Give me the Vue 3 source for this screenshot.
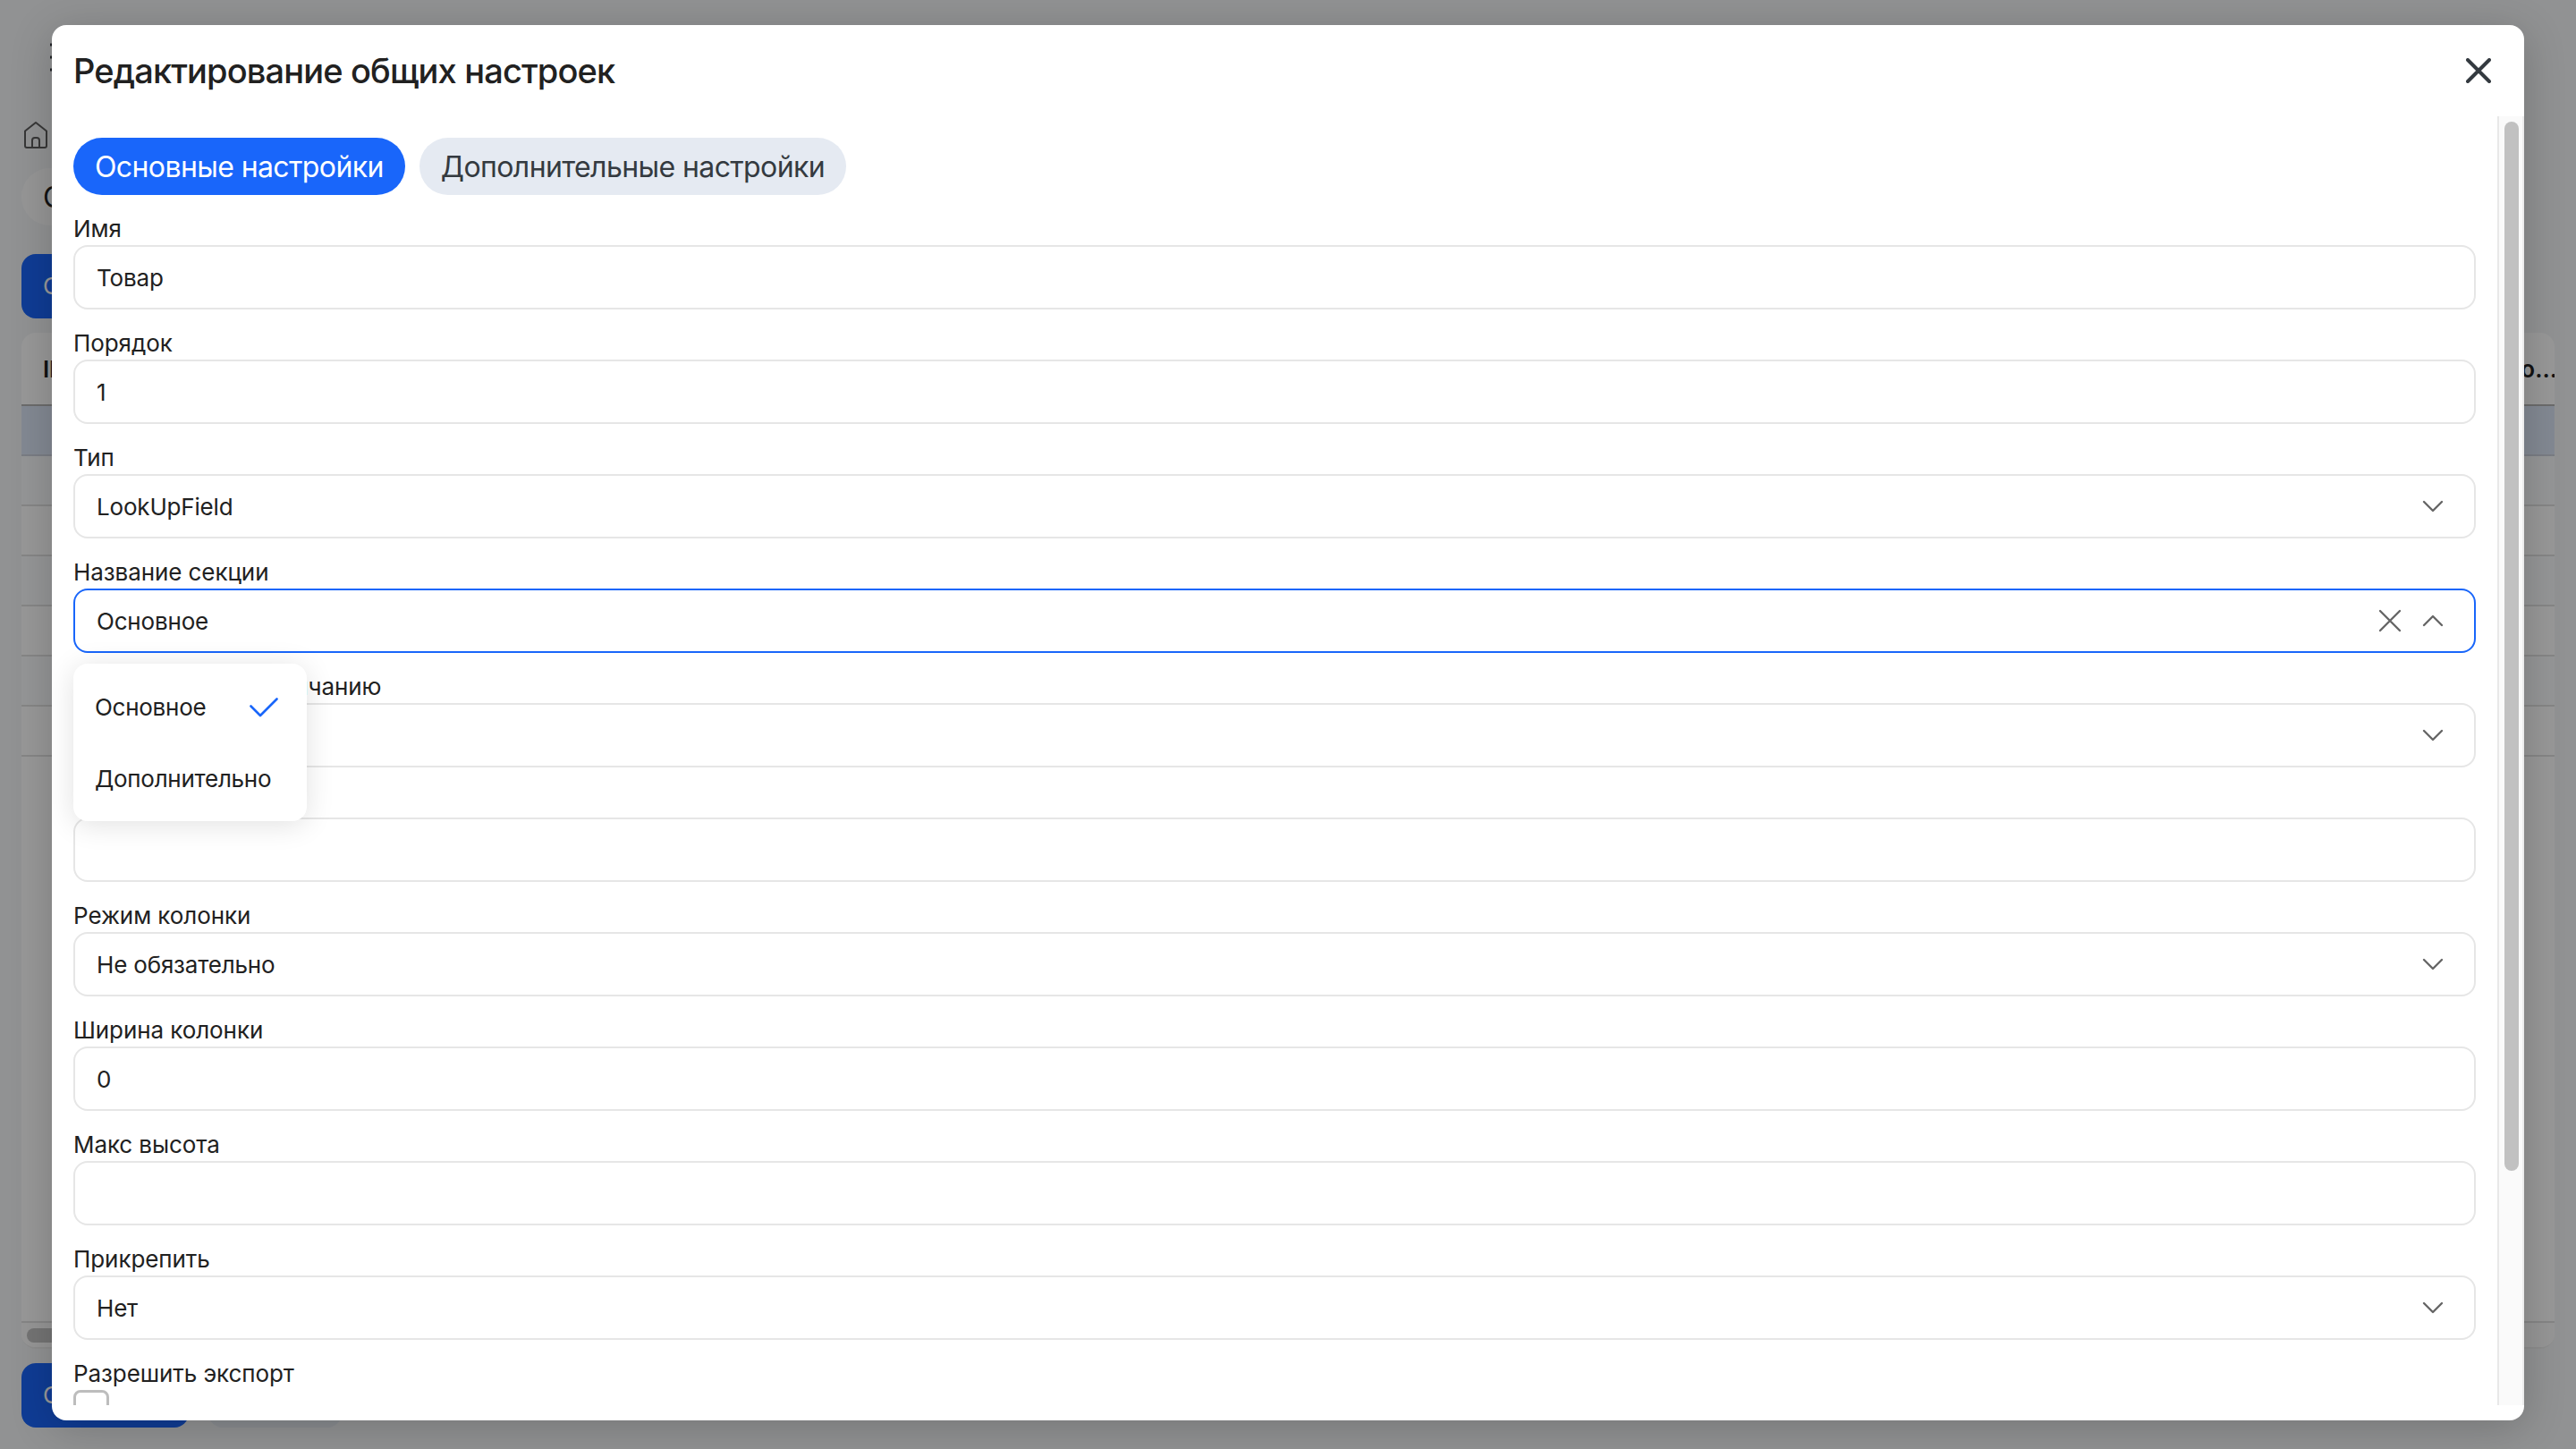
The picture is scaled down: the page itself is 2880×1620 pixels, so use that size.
<template>
  <div class="page">
    <div class="topbar">
      <svg class="burger" viewBox="0 0 40 32">
        <path d="M0 2h40M0 16h40M0 30h40" />
      </svg>
    </div>
    <svg class="home" viewBox="0 0 28 32">
      <path d="M2 11.500L14 2l12 9.500V28q0 2-2 2H4q-2 0-2-2zM10 30V22q0-3 3-3h2q3 0 3 3v8" />
    </svg>
    <div class="chip">О</div>
    <div class="page-btn">С</div>
    <div class="table">
      <div class="thead">
        <span>ID</span>
        <span class="last">о...</span>
      </div>
      <div v-for="n in 7" :key="n" class="row" :class="{ selected: n === 1, odd: n % 2 === 0 }" />
      <div class="table-scroll">
        <div class="table-thumb" />
      </div>
    </div>
    <div class="page-footer">
      <div class="page-btn save">С</div>
      <div class="page-btn cancel" />
    </div>
  </div>

  <div class="overlay">
    <div class="modal">
      <header class="modal-header">
        <h2 class="title">Редактирование общих настроек</h2>
        <svg class="close" viewBox="0 0 28 28" @click="dropdownOpen = false">
          <path d="M2 2l24 24M26 2L2 26" />
        </svg>
      </header>

      <div class="modal-body">
        <div class="content">
          <div class="tabs">
            <button
              v-for="(tab, i) in tabs"
              :key="tab"
              class="tab"
              :class="{ active: activeTab === i }"
              @click="activeTab = i"
            >{{ tab }}</button>
          </div>

          <div v-for="field in fields" :key="field.id" class="field">
            <div class="label">{{ field.label }}</div>
            <div v-if="field.type === 'check'" class="checkbox" />
            <div v-else class="input" :class="{ focused: field.open && dropdownOpen }">
              <span class="value">{{ field.value }}</span>
              <svg v-if="field.open" class="clear" viewBox="0 0 26 26">
                <path d="M2 2l22 22M24 2L2 24" />
              </svg>
              <svg v-if="field.type === 'select'" class="chevron" :class="{ up: field.open }" viewBox="0 0 24 14">
                <path d="M2 2l10 10L22 2" />
              </svg>
            </div>

            <div v-if="field.open && dropdownOpen" class="dropdown">
              <div v-for="option in options" :key="option" class="option">
                <span>{{ option }}</span>
                <svg v-if="option === field.value" class="check" viewBox="0 0 32 22">
                  <path d="M1.500 9.500L12 20L30.500 1.500" />
                </svg>
              </div>
            </div>
          </div>
        </div>
        <div class="scroll-track">
          <div class="scroll-thumb" />
        </div>
      </div>
    </div>
  </div>
</template>

<script setup>
import { ref } from 'vue'

const activeTab = ref(0)
const dropdownOpen = ref(true)

const tabs = ['Основные настройки', 'Дополнительные настройки']
const options = ['Основное', 'Дополнительно']

const fields = [
  { id: 'name', label: 'Имя', value: 'Товар', type: 'text' },
  { id: 'order', label: 'Порядок', value: '1', type: 'text' },
  { id: 'type', label: 'Тип', value: 'LookUpField', type: 'select' },
  { id: 'section', label: 'Название секции', value: 'Основное', type: 'select', open: true },
  { id: 'default', label: 'Сортировка по умолчанию', value: '', type: 'select' },
  { id: 'hint', label: '', value: '', type: 'text' },
  { id: 'mode', label: 'Режим колонки', value: 'Не обязательно', type: 'select' },
  { id: 'width', label: 'Ширина колонки', value: '0', type: 'text' },
  { id: 'height', label: 'Макс высота', value: '', type: 'text' },
  { id: 'pin', label: 'Прикрепить', value: 'Нет', type: 'select' },
  { id: 'export', label: 'Разрешить экспорт', type: 'check' },
]
</script>

<style>
body {
  margin: 0;
  overflow: hidden;
}
</style>

<style scoped>
* {
  box-sizing: border-box;
}

svg {
  fill: none;
  stroke-linecap: round;
  stroke-linejoin: round;
  flex: none;
}

.page,
.overlay {
  width: 2880px;
  height: 1620px;
  font-family: Inter, 'Liberation Sans', sans-serif;
  font-size: 26px;
  letter-spacing: -0.18px;
  color: #212121;
}

/* page behind the modal */
.page {
  display: flex;
  flex-direction: column;
  padding: 0 24px 24px;
  background: #f2f4f6;
}

.topbar {
  height: 135px;
  padding: 48px 32px 0;
}

.burger {
  display: block;
  width: 40px;
  height: 32px;
  stroke: #343a40;
  stroke-width: 3;
}

.home {
  width: 28px;
  height: 32px;
  margin: 0 2px 21px;
  stroke: #5c5c5c;
  stroke-width: 2;
}

.chip {
  flex: none;
  width: 300px;
  height: 64px;
  padding-left: 24px;
  border-radius: 32px;
  background: #fbfbfb;
  font-size: 32px;
  line-height: 66px;
}

.page-btn {
  flex: none;
  width: 187px;
  height: 72px;
  margin-top: 32px;
  padding-left: 24px;
  border-radius: 16px;
  background: #1964f8;
  color: #fff;
  line-height: 72px;
}

.table {
  flex: 1;
  display: flex;
  flex-direction: column;
  margin-top: 16px;
  border-radius: 16px;
  background: #fdfdfd;
  border-bottom: 2px solid #ececec;
  overflow: hidden;
}

.thead {
  display: flex;
  justify-content: space-between;
  height: 82px;
  padding-left: 24px;
  border-bottom: 2px solid #b5b5b5;
  font-weight: 600;
  line-height: 82px;
}

.thead .last {
  margin-right: -3px;
  letter-spacing: 0;
}

.row {
  height: 56px;
  border-bottom: 2px solid #dfdfdf;
}

.row.odd {
  background: #f9fafc;
}

.row.selected {
  background: #dae4f6;
  border-color: #cbd1dc;
}

.table-scroll {
  height: 29px;
  margin-top: auto;
  padding: 6px;
  border-top: 2px solid #e0e0e0;
  background: #fafafa;
}

.table-thumb {
  width: 1500px;
  height: 16px;
  border-radius: 8px;
  background: #c1c1c1;
}

.page-footer {
  display: flex;
  gap: 22px;
  margin-top: 16px;
}

.page-footer .page-btn {
  margin-top: 0;
}

.page-btn.cancel {
  width: 149px;
  background: #e4e9f1;
}

/* modal */
.overlay {
  position: absolute;
  top: 0;
  left: 0;
  padding: 28px 58px 32px;
  background: rgba(0, 0, 0, 0.4);
}

.modal {
  display: flex;
  flex-direction: column;
  height: 1560px;
  padding-bottom: 17px;
  border-radius: 16px;
  background: #fff;
  box-shadow: 0 8px 48px rgba(0, 0, 0, 0.2);
}

.modal-header {
  display: flex;
  align-items: center;
  justify-content: space-between;
  flex: none;
  height: 102px;
  padding: 0 37px 0 24px;
}

.title {
  margin: 0;
  font-size: 38px;
  font-weight: 500;
  letter-spacing: -0.86px;
}

.close {
  width: 28px;
  height: 28px;
  stroke: #343a40;
  stroke-width: 4;
}

.modal-body {
  display: flex;
  flex: 1;
  min-height: 0;
  overflow: hidden;
}

.content {
  flex: 1;
  padding: 24px 24px 0;
}

.tabs {
  display: flex;
  gap: 16px;
}

.tab {
  height: 64px;
  padding: 0 24px;
  border: none;
  border-radius: 32px;
  background: #e5eaf2;
  color: #343a40;
  font-family: inherit;
  font-size: 32px;
  letter-spacing: -0.6px;
}

.tab.active {
  background: #1966fa;
  color: #fff;
}

.field {
  position: relative;
  padding-top: 18px;
}

.label {
  height: 38px;
  line-height: 39px;
  letter-spacing: -0.08px;
}

.input {
  display: flex;
  align-items: center;
  height: 72px;
  padding: 0 34px 0 24px;
  border: 2px solid #e6e6e6;
  border-radius: 16px;
}

.input.focused {
  border-color: #1966fa;
}

.value {
  flex: 1;
}

.clear {
  width: 26px;
  height: 26px;
  margin-right: 23px;
  stroke: #666;
  stroke-width: 2.4;
}

.chevron {
  width: 24px;
  height: 14px;
  stroke: #666;
  stroke-width: 2.4;
}

.chevron.up {
  transform: rotate(180deg);
}

.checkbox {
  width: 40px;
  height: 40px;
  border: 3px solid #bdbdbd;
  border-radius: 8px;
}

.dropdown {
  position: absolute;
  top: 140px;
  left: 0;
  z-index: 2;
  width: 261px;
  padding: 8px 0;
  border-radius: 16px;
  background: #fff;
  box-shadow: 0 4px 32px rgba(0, 0, 0, 0.12);
}

.option {
  display: flex;
  align-items: center;
  justify-content: space-between;
  height: 80px;
  padding: 1px 32px 0 24px;
  letter-spacing: -0.27px;
}

.check {
  width: 32px;
  height: 22px;
  stroke: #1966fa;
  stroke-width: 2.6;
}

.scroll-track {
  width: 30px;
  padding: 6px 4px 6px 6px;
  border-left: 2px solid #e8e8e8;
  border-right: 2px solid #ededed;
  background: #fafafa;
}

.scroll-thumb {
  width: 16px;
  height: 1173px;
  border-radius: 8px;
  background: #c1c1c1;
}
</style>
